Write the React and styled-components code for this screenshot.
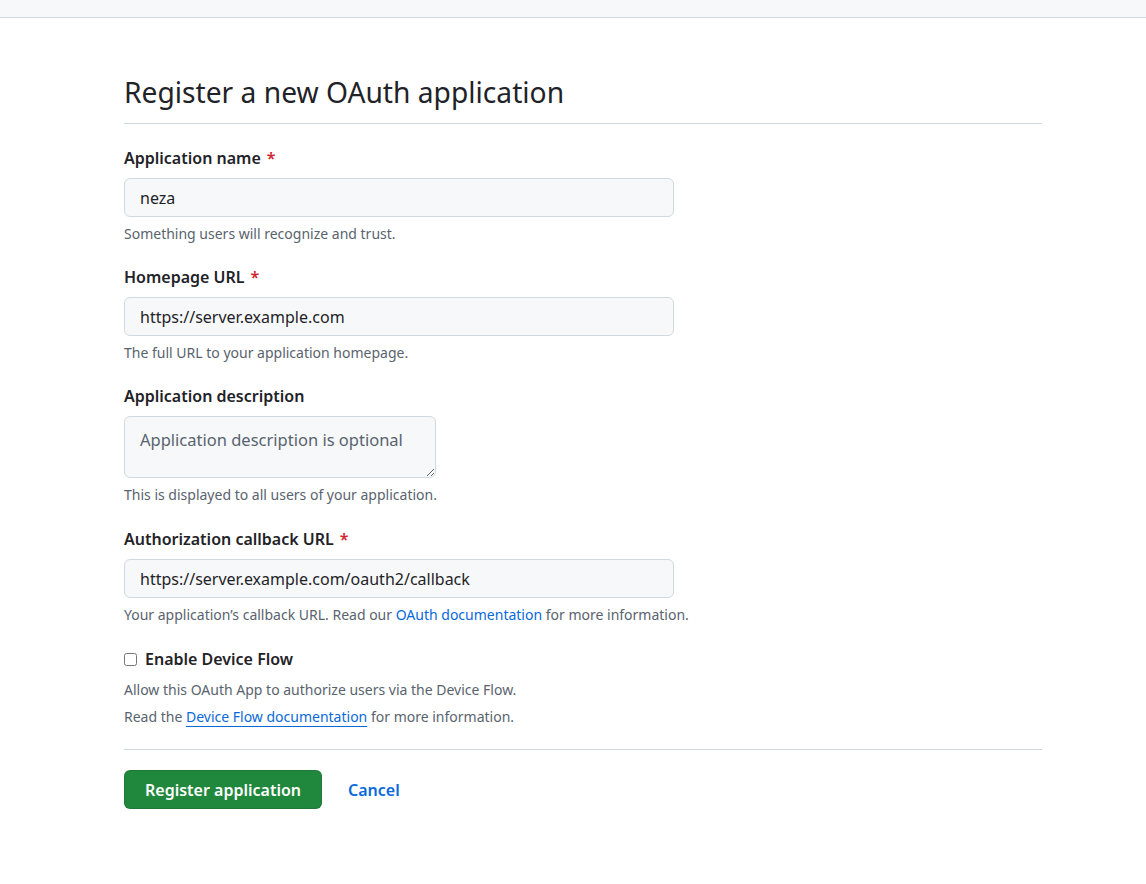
import React from 'react';
import styled, { createGlobalStyle } from 'styled-components';

const Global = createGlobalStyle`
  html, body { margin: 0; padding: 0; background: #fff; }
  body {
    font-family: "Noto Sans", "Liberation Sans", sans-serif;
    color: #1f2328;
  }
`;

const TopBar = styled.div`
  height: 17px;
  background: #f6f8fa;
  border-bottom: 1px solid #d1d9e0;
`;

const Page = styled.main`
  width: 918px;
  margin-left: 124px;
  padding-top: 55px;
`;

const Subhead = styled.div`
  padding-bottom: 12px;
  border-bottom: 1px solid #d1d9e0;
  margin-bottom: 22px;
`;

const Heading = styled.h1`
  margin: 0;
  font-size: 28.2px;
  font-weight: 400;
  line-height: 38px;
  color: #1f2328;
`;

const Group = styled.div`
  margin-bottom: ${({ $gap }) => ($gap === undefined ? 21 : $gap)}px;
`;

const Label = styled.label`
  display: block;
  font-size: 16px;
  font-weight: 600;
  line-height: 24px;
  margin-bottom: 8px;
`;

const Required = styled.span`
  color: #d1242f;
  margin-left: 6px;
`;

const Input = styled.input`
  box-sizing: border-box;
  width: 550px;
  height: 39px;
  padding: 1px 15px 0;
  font: inherit;
  font-size: 16px;
  color: #1f2328;
  background: #f6f8fa;
  border: 1px solid #d1d9e0;
  border-radius: 6px;
  outline: none;
  display: block;
`;

const TextArea = styled.textarea`
  box-sizing: border-box;
  width: 312px;
  height: 62px;
  padding: 11px 15px;
  font: inherit;
  font-size: 16.5px;
  line-height: 24px;
  color: #1f2328;
  background: #f6f8fa;
  border: 1px solid #d1d9e0;
  border-radius: 6px;
  outline: none;
  display: block;
  &::placeholder { color: #59636e; }
`;

const Note = styled.p`
  margin: 6px 0 0;
  font-size: 14px;
  line-height: 21px;
  color: #59636e;
`;

const Link = styled.a`
  color: #0969da;
  text-decoration: ${({ $underline }) => ($underline ? 'underline' : 'none')};
  text-underline-offset: 4px;
`;

const CheckRow = styled.label`
  display: flex;
  align-items: center;
  gap: 8px;
  font-size: 16px;
  font-weight: 600;
  line-height: 24px;
`;

const Check = styled.input`
  width: 13px;
  height: 13px;
  margin: 0;
`;

const CheckNote = styled.p`
  margin: ${({ $first }) => ($first ? '8px' : '6px')} 0 0;
  font-size: 14px;
  line-height: 21px;
  color: #59636e;
`;

const Divider = styled.hr`
  border: 0;
  border-top: 1px solid #d1d9e0;
  margin: 22px 0 20px;
`;

const Actions = styled.div`
  display: flex;
  align-items: center;
  gap: 26px;
`;

const Primary = styled.button`
  height: 39px;
  padding: 0 20px;
  font: inherit;
  font-size: 16px;
  font-weight: 600;
  color: #fff;
  background: #1f883d;
  border: 1px solid rgba(31, 35, 40, 0.15);
  border-radius: 6px;
`;

const CancelLink = styled.a`
  color: #0969da;
  font-size: 16px;
  font-weight: 600;
  text-decoration: none;
`;

export default function App() {
  return (
    <>
      <Global />
      <TopBar />
      <Page>
        <Subhead>
          <Heading>Register a new OAuth application</Heading>
        </Subhead>

        <Group>
          <Label>Application name<Required>*</Required></Label>
          <Input defaultValue="neza" />
          <Note>Something users will recognize and trust.</Note>
        </Group>

        <Group>
          <Label>Homepage URL<Required>*</Required></Label>
          <Input defaultValue="https://server.example.com" />
          <Note>The full URL to your application homepage.</Note>
        </Group>

        <Group $gap={22}>
          <Label>Application description</Label>
          <TextArea placeholder="Application description is optional" />
          <Note>This is displayed to all users of your application.</Note>
        </Group>

        <Group $gap={22}>
          <Label>Authorization callback URL<Required>*</Required></Label>
          <Input defaultValue="https://server.example.com/oauth2/callback" />
          <Note>
            Your application’s callback URL. Read our <Link href="#">OAuth documentation</Link> for more information.
          </Note>
        </Group>

        <Group $gap={0}>
          <CheckRow>
            <Check type="checkbox" />
            Enable Device Flow
          </CheckRow>
          <CheckNote $first>Allow this OAuth App to authorize users via the Device Flow.</CheckNote>
          <CheckNote>
            Read the <Link href="#" $underline>Device Flow documentation</Link> for more information.
          </CheckNote>
        </Group>

        <Divider />

        <Actions>
          <Primary>Register application</Primary>
          <CancelLink href="#">Cancel</CancelLink>
        </Actions>
      </Page>
    </>
  );
}
